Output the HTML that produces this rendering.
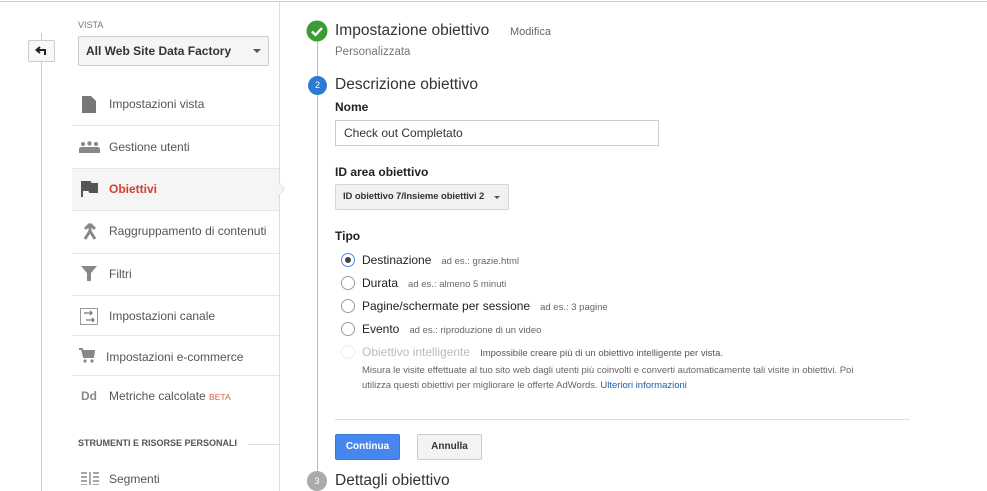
<!DOCTYPE html>
<html><head><meta charset="utf-8"><style>
*{box-sizing:border-box;margin:0;padding:0}
body{width:987px;height:491px;overflow:hidden;background:#fff;font-family:"Liberation Sans",Arial,sans-serif;color:#222;position:relative}
.a{position:absolute}
.t{position:absolute;white-space:nowrap}
.sep{position:absolute;left:72px;width:207px;height:1px;background:#e5e5e5}
.mi{position:absolute;left:109px;font-size:12px;color:#555;white-space:nowrap}
.radio{position:absolute;left:341px;width:14px;height:14px;border:1px solid #9e9e9e;border-radius:50%;background:#fff}
.rl{position:absolute;left:362px;font-size:12px;color:#222;white-space:nowrap}
.ex{font-size:9.5px;color:#666;margin-left:10px}
</style></head><body>
<div class="a" style="left:0;top:1px;width:987px;height:1px;background:#ccc"></div>
<div class="a" style="left:41px;top:33px;width:1px;height:458px;background:#ccc"></div>
<div class="a" style="left:28px;top:40px;width:27px;height:22px;border:1px solid #ccc;border-radius:2px;background:#f8f8f8"></div>
<svg class="a" style="left:35px;top:45px" width="14" height="12" viewBox="0 0 14 12"><path d="M5 2 L1.5 5 L5 8 M2 5 H10 V10" fill="none" stroke="#222" stroke-width="2"/></svg>
<div class="a" style="left:279px;top:2px;width:1px;height:489px;background:#ddd"></div>
<div class="t" style="left:78px;top:20px;font-size:9px;color:#777">VISTA</div>
<div class="a" style="left:78px;top:36px;width:191px;height:30px;border:1px solid #ccc;border-radius:2px;background:#f5f5f5"></div>
<div class="t" style="left:86px;top:44px;font-size:12px;font-weight:bold;color:#333">All Web Site Data Factory</div>
<div class="a" style="left:253px;top:49px;border-left:4px solid transparent;border-right:4px solid transparent;border-top:4px solid #555"></div>

<div class="a" style="left:72px;top:168px;width:207px;height:42px;background:#f5f5f5"></div>
<div class="a" style="left:278px;top:181px;width:0;height:0;border-top:8px solid transparent;border-bottom:8px solid transparent;border-left:7px solid #ddd"></div>
<div class="a" style="left:278px;top:182px;width:0;height:0;border-top:7px solid transparent;border-bottom:7px solid transparent;border-left:6px solid #f5f5f5"></div>
<div class="sep" style="top:125px"></div><div class="sep" style="top:168px"></div><div class="sep" style="top:210px"></div><div class="sep" style="top:253px"></div><div class="sep" style="top:295px"></div><div class="sep" style="top:335px"></div><div class="sep" style="top:375px"></div>

<svg class="a" style="left:82px;top:96px" width="14" height="17"><path d="M0 0H9L14 5V17H0Z" fill="#777"/></svg>
<div class="mi" style="top:97px">Impostazioni vista</div>
<svg class="a" style="left:79px;top:141px" width="21" height="12"><circle cx="4" cy="3" r="2" fill="#888"/><circle cx="10.5" cy="2.5" r="2.2" fill="#888"/><circle cx="17" cy="3" r="2" fill="#888"/><path d="M0 12V8Q0 6 3 6H18Q21 6 21 8V12Z" fill="#888"/></svg>
<div class="mi" style="top:140px">Gestione utenti</div>
<svg class="a" style="left:81px;top:181px" width="17" height="16"><path d="M1 0V16M1 1H9L10 3H16V11H9L8 9H1" fill="#555" stroke="#555" stroke-width="2"/></svg>
<div class="mi" style="top:182px;color:#d23f31;font-weight:bold">Obiettivi</div>
<svg class="a" style="left:82px;top:223px" width="16" height="17"><path d="M8 1L3 6M8 1L13 6M8 2V8L3 16M8 8L13 16" fill="none" stroke="#888" stroke-width="3"/></svg>
<div class="mi" style="top:224px">Raggruppamento di contenuti</div>
<svg class="a" style="left:81px;top:266px" width="16" height="15"><path d="M0 0H16L10 7V15H6V7Z" fill="#888"/></svg>
<div class="mi" style="top:267px">Filtri</div>
<svg class="a" style="left:80px;top:308px" width="18" height="17"><rect x="0.5" y="0.5" width="17" height="16" fill="none" stroke="#999"/><path d="M4 5H12M10 3L12 5L10 7M6 12H14M12 10L14 12L12 14" stroke="#777" fill="none" stroke-width="1.3"/></svg>
<div class="mi" style="top:309px">Impostazioni canale</div>
<svg class="a" style="left:79px;top:348px" width="16" height="15"><path d="M0 1H3L5 9H14L15 3H4" fill="#888" stroke="#888" stroke-width="2"/><circle cx="6" cy="13" r="1.6" fill="#888"/><circle cx="13" cy="13" r="1.6" fill="#888"/></svg>
<div class="mi" style="top:350px;left:106px">Impostazioni e-commerce</div>
<div class="t" style="left:81px;top:389px;font-size:12px;font-weight:bold;color:#888">Dd</div>
<div class="mi" style="top:389px">Metriche calcolate <span style="font-size:8.5px;color:#e05a3e">BETA</span></div>
<div class="t" style="left:78px;top:438px;font-size:9px;font-weight:bold;color:#555">STRUMENTI E RISORSE PERSONALI</div>
<div class="a" style="left:248px;top:444px;width:31px;height:1px;background:#e0e0e0"></div>
<svg class="a" style="left:81px;top:472px" width="18" height="13"><path d="M0 1H6M0 5H6M0 9H6M0 13H6M9 0V13M12 1H18M12 5H18M12 9H18M12 13H18" stroke="#888" stroke-width="1.4"/></svg>
<div class="mi" style="top:472px">Segmenti</div>

<div class="a" style="left:317px;top:40px;width:1px;height:432px;background:#bbb"></div>
<svg class="a" style="left:306px;top:20px" width="22" height="22"><circle cx="11" cy="11" r="10.5" fill="#3a9c32"/><path d="M6 11.5L9.5 15L16 8" stroke="#fff" stroke-width="2.3" fill="none"/></svg>
<div class="t" style="left:335px;top:22px;font-size:15.5px;color:#333">Impostazione obiettivo</div>
<div class="t" style="left:510px;top:26px;font-size:11px;color:#666">Modifica</div>
<div class="t" style="left:335px;top:46px;font-size:11.5px;color:#777">Personalizzata</div>
<div class="a" style="left:308px;top:76px;width:19px;height:19px;border-radius:50%;background:#2d7ad2;color:#fff;font-size:9px;text-align:center;line-height:19px">2</div>
<div class="t" style="left:335px;top:76px;font-size:15.5px;color:#333">Descrizione obiettivo</div>
<div class="t" style="left:335px;top:100px;font-size:12px;font-weight:bold">Nome</div>
<div class="a" style="left:335px;top:120px;width:324px;height:26px;border:1px solid #ccc"></div>
<div class="t" style="left:344px;top:126px;font-size:12px;color:#333">Check out Completato</div>
<div class="t" style="left:335px;top:165px;font-size:12px;font-weight:bold">ID area obiettivo</div>
<div class="a" style="left:335px;top:184px;width:174px;height:26px;border:1px solid #d5d5d5;border-radius:2px;background:#f1f1f1"></div>
<div class="t" style="left:343px;top:191px;font-size:9.5px;font-weight:bold;color:#333;letter-spacing:-0.1px">ID obiettivo 7/Insieme obiettivi 2</div>
<div class="a" style="left:494px;top:196px;border-left:3.5px solid transparent;border-right:3.5px solid transparent;border-top:3.5px solid #555"></div>
<div class="t" style="left:335px;top:229px;font-size:12px;font-weight:bold">Tipo</div>

<div class="radio" style="top:253px;border-color:#4a8ae0"></div><div class="a" style="left:345px;top:257px;width:6px;height:6px;border-radius:50%;background:#444"></div>
<div class="rl" style="top:253px">Destinazione<span class="ex">ad es.: grazie.html</span></div>
<div class="radio" style="top:276px"></div><div class="rl" style="top:276px">Durata<span class="ex">ad es.: almeno 5 minuti</span></div>
<div class="radio" style="top:299px"></div><div class="rl" style="top:299px">Pagine/schermate per sessione<span class="ex">ad es.: 3 pagine</span></div>
<div class="radio" style="top:322px"></div><div class="rl" style="top:322px">Evento<span class="ex">ad es.: riproduzione di un video</span></div>
<div class="radio" style="top:345px;border-color:#eee"></div><div class="rl" style="top:345px;color:#bbb">Obiettivo intelligente<span class="ex" style="color:#555">Impossibile creare più di un obiettivo intelligente per vista.</span></div>
<div class="a" style="left:362px;top:363px;width:522px;font-size:9.5px;color:#666;line-height:15px">Misura le visite effettuate al tuo sito web dagli utenti più coinvolti e converti automaticamente tali visite in obiettivi. Poi utilizza questi obiettivi per migliorare le offerte AdWords. <span style="color:#1a5fa8">Ulteriori informazioni</span></div>
<div class="a" style="left:335px;top:419px;width:575px;height:1px;background:#ddd"></div>
<div class="a" style="left:335px;top:434px;width:65px;height:26px;background:#4787ed;border:1px solid #3a78d8;border-radius:2px;color:#fff;font-size:10px;font-weight:bold;text-align:center;line-height:24px">Continua</div>
<div class="a" style="left:417px;top:434px;width:65px;height:26px;background:#f3f3f3;border:1px solid #ccc;border-radius:2px;color:#333;font-size:10px;font-weight:bold;text-align:center;line-height:24px">Annulla</div>
<div class="a" style="left:307px;top:471px;width:20px;height:20px;border-radius:50%;background:#aaa;color:#fff;font-size:9px;text-align:center;line-height:20px">3</div>
<div class="t" style="left:335px;top:472px;font-size:15.5px;color:#333">Dettagli obiettivo</div>
</body></html>
